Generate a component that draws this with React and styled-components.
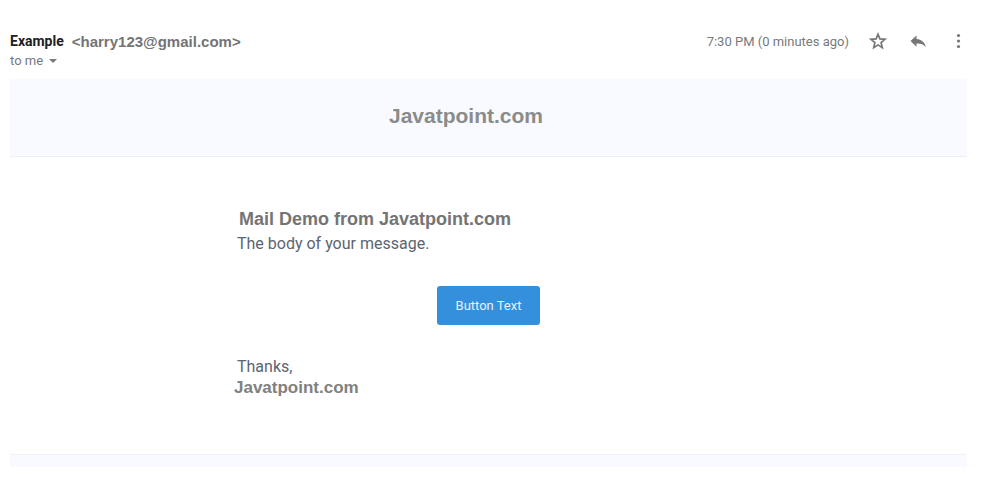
import React from "react";
import styled, { createGlobalStyle } from "styled-components";

const GlobalStyle = createGlobalStyle`
  * { box-sizing: border-box; }
  body { margin: 0; background: #fff; font-family: Roboto, "Liberation Sans", sans-serif; }
`;

const Page = styled.main`
  padding: 30px 33px 22px 10px;
`;

const MailHeader = styled.header`
  display: flex;
  justify-content: space-between;
  align-items: flex-start;
  height: 49px;
`;

const SenderLine = styled.div`
  display: flex;
  align-items: center;
  gap: 8px;
  height: 22px;
`;

const SenderName = styled.strong`
  font-size: 14px;
  font-weight: 700;
  color: #202124;
`;

const SenderAddress = styled.span`
  font: 700 15px "Liberation Sans", sans-serif;
  color: #747474;
`;

const Recipient = styled.button`
  display: flex;
  align-items: center;
  gap: 6px;
  padding: 0;
  border: 0;
  background: none;
  font: 400 13px/18px Roboto, sans-serif;
  color: #777a7d;
`;

const Actions = styled.div`
  display: flex;
  align-items: center;
  height: 22px;
`;

const Time = styled.time`
  margin-right: 20px;
  font-size: 13px;
  color: #777a7d;
`;

const IconButton = styled.button`
  display: flex;
  padding: 0;
  margin-right: ${(p) => (p.$last ? "-2px" : "20px")};
  border: 0;
  background: none;
  color: #747678;
`;

const Band = styled.div`
  display: flex;
  justify-content: center;
  align-items: center;
  height: 78px;
  padding: 0 45px 4px 0;
  background: #f8faff;
  border-bottom: 1px solid #edeff2;
`;

const Brand = styled.div`
  font: 700 21px/24px "Liberation Sans", sans-serif;
  color: #8b8b89;
`;

const Content = styled.article`
  width: 100%;
  max-width: 503px;
  margin: 0 auto;
  padding: 50px 0 57px;
`;

const Title = styled.h1`
  margin: 0 0 0 2px;
  font: 700 18px/24px "Liberation Sans", sans-serif;
  color: #747474;
`;

const Text = styled.p`
  margin: 0;
  font-size: 16px;
  line-height: 25px;
  color: #5c6470;
`;

const ButtonRow = styled.div`
  display: flex;
  justify-content: center;
  padding: 30px 0 29px;
`;

const MailButton = styled.button`
  height: 39px;
  padding: 0 19px;
  border: 0;
  border-radius: 3px;
  background: #3490dc;
  color: #e6f2fc;
  font: 400 13px Roboto, sans-serif;
`;

const Signature = styled.div`
  margin-left: -3px;
  font: 700 17px/18px "Liberation Sans", sans-serif;
  color: #808080;
`;

const Footer = styled.footer`
  height: 13px;
  background: #f8faff;
  border-top: 1px solid #f1f4f4;
`;

export default function App() {
  return (
    <>
      <GlobalStyle />
      <Page>
        <MailHeader>
          <div>
            <SenderLine>
              <SenderName>Example</SenderName>
              <SenderAddress>&lt;harry123@gmail.com&gt;</SenderAddress>
            </SenderLine>
            <Recipient type="button">
              to me
              <svg width="8" height="4" viewBox="0 0 8 4" aria-hidden="true">
                <path d="M0 0h8L4 4z" fill="currentColor" />
              </svg>
            </Recipient>
          </div>
          <Actions>
            <Time>7:30 PM (0 minutes ago)</Time>
            <IconButton type="button" aria-label="Star">
              <svg width="20" height="20" viewBox="0 0 20 20" fill="none" stroke="currentColor" strokeWidth="1.7">
                <path d="M9 3.200l1.900 4.700 5.100.4-3.900 3.300 1.200 5L9 13.900l-4.300 2.700 1.200-5L2 8.300l5.100-.4z" />
              </svg>
            </IconButton>
            <IconButton type="button" aria-label="Reply">
              <svg width="20" height="20" viewBox="0 0 20 20" fill="currentColor">
                <path d="M7.500 4.500v3.600c5 .5 8.300 3.200 9.300 8-2.400-2.700-5.200-3.700-9.300-3.500v3.100L1.500 10z" />
              </svg>
            </IconButton>
            <IconButton type="button" aria-label="More" $last>
              <svg width="20" height="20" viewBox="0 0 20 20" fill="currentColor">
                <circle cx="9.500" cy="4.500" r="1.600" />
                <circle cx="9.500" cy="10" r="1.600" />
                <circle cx="9.500" cy="15.500" r="1.600" />
              </svg>
            </IconButton>
          </Actions>
        </MailHeader>
        <Band>
          <Brand>Javatpoint.com</Brand>
        </Band>
        <Content>
          <Title>Mail Demo from Javatpoint.com</Title>
          <Text>The body of your message.</Text>
          <ButtonRow>
            <MailButton type="button">Button Text</MailButton>
          </ButtonRow>
          <Text>Thanks,</Text>
          <Signature>Javatpoint.com</Signature>
        </Content>
        <Footer />
      </Page>
    </>
  );
}
